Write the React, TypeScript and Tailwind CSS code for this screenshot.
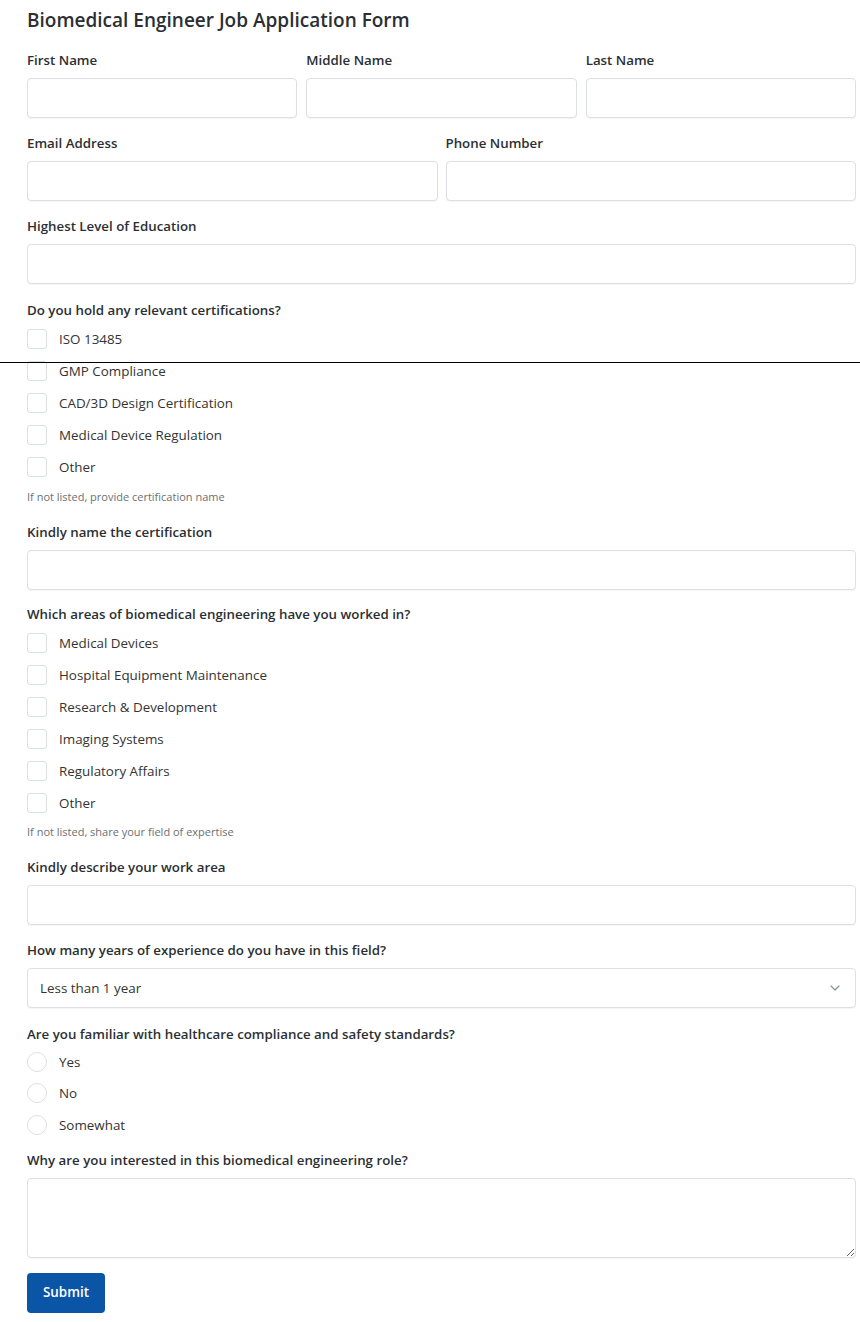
import React from 'react';

const font = { fontFamily: '"Open Sans", "Liberation Sans", sans-serif' };

const Label: React.FC<{ children: React.ReactNode }> = ({ children }) => (
    <label className="block text-[13.3px] leading-5 font-semibold text-[#2b2f33] mb-2">{children}</label>
);

const TextInput: React.FC = () => (
    <input
        type="text"
        className="block w-full h-10 rounded border border-[#dcdfe3] bg-white px-3 text-[13px] outline-none shadow-[0_1px_1px_rgba(0,0,0,0.04)]"
    />
);

const Field: React.FC<{ label: string }> = ({ label }) => (
    <div className="flex flex-col">
        <Label>{label}</Label>
        <TextInput />
    </div>
);

const CheckRow: React.FC<{ text: string; round?: boolean }> = ({ text, round }) => (
    <label className="flex items-center h-8 gap-3">
        <span
            className={`w-5 h-5 shrink-0 border border-[#dcdfe3] bg-white ${round ? 'rounded-full' : 'rounded-[3px]'}`}
        />
        <span className="text-[13.4px] text-[#333]">{text}</span>
    </label>
);

export default function App() {
    const certs = ['ISO 13485', 'GMP Compliance', 'CAD/3D Design Certification', 'Medical Device Regulation', 'Other'];
    const areas = [
        'Medical Devices',
        'Hospital Equipment Maintenance',
        'Research & Development',
        'Imaging Systems',
        'Regulatory Affairs',
        'Other',
    ];

    return (
        <div className="relative min-h-[1322px] bg-white" style={font}>
            <form className="pl-[27px] pr-[4px] pt-[6px] pb-8">
                <h1 className="text-[19px] leading-7 font-semibold text-[#2b2f33] mb-4">
                    Biomedical Engineer Job Application Form
                </h1>

                <div className="grid grid-cols-3 gap-[9px]">
                    <Field label="First Name" />
                    <Field label="Middle Name" />
                    <Field label="Last Name" />
                </div>

                <div className="grid grid-cols-2 gap-2 mt-[15px]">
                    <Field label="Email Address" />
                    <Field label="Phone Number" />
                </div>

                <div className="mt-[15px]">
                    <Field label="Highest Level of Education" />
                </div>

                <div className="mt-[16px]">
                    <Label>Do you hold any relevant certifications?</Label>
                    <div className="-mt-[5px]">
                        {certs.map((c) => (
                            <CheckRow key={c} text={c} />
                        ))}
                    </div>
                    <p className="mt-[6px] text-[11px] leading-4 text-[#6b7075]">If not listed, provide certification name</p>
                </div>

                <div className="mt-[17px]">
                    <Field label="Kindly name the certification" />
                </div>

                <div className="mt-[14px]">
                    <Label>Which areas of biomedical engineering have you worked in?</Label>
                    <div className="-mt-[5px]">
                        {areas.map((a) => (
                            <CheckRow key={a} text={a} />
                        ))}
                    </div>
                    <p className="mt-[5px] text-[11px] leading-4 text-[#6b7075]">If not listed, share your field of expertise</p>
                </div>

                <div className="mt-[17px]">
                    <Field label="Kindly describe your work area" />
                </div>

                <div className="mt-[15px]">
                    <Label>How many years of experience do you have in this field?</Label>
                    <div className="relative">
                        <select className="block w-full h-10 appearance-none rounded border border-[#dcdfe3] bg-white pl-3 pr-8 text-[13.4px] text-[#333] outline-none shadow-[0_1px_1px_rgba(0,0,0,0.04)]">
                            <option>Less than 1 year</option>
                            <option>1-3 years</option>
                            <option>3-5 years</option>
                            <option>More than 5 years</option>
                        </select>
                        <svg
                            className="absolute right-[16px] top-1/2 -translate-y-1/2 pointer-events-none"
                            width="10"
                            height="6"
                            viewBox="0 0 10 6"
                            fill="none"
                        >
                            <path d="M1 1l4 4 4-4" stroke="#8a8f94" strokeWidth="1.2" strokeLinecap="round" strokeLinejoin="round" />
                        </svg>
                    </div>
                </div>

                <div className="mt-[16px]">
                    <Label>Are you familiar with healthcare compliance and safety standards?</Label>
                    <div className="-mt-[6px] flex flex-col">
                        {['Yes', 'No', 'Somewhat'].map((o) => (
                            <div key={o} className="h-[31.5px] flex items-center">
                                <CheckRow text={o} round />
                            </div>
                        ))}
                    </div>
                </div>

                <div className="mt-[9px]">
                    <Label>Why are you interested in this biomedical engineering role?</Label>
                    <textarea className="block w-full h-[80px] rounded border border-[#dcdfe3] bg-white px-3 py-2 text-[13px] outline-none shadow-[0_1px_1px_rgba(0,0,0,0.04)]" />
                </div>

                <button
                    type="button"
                    className="mt-[15px] h-10 px-4 rounded bg-[#0a55a6] text-white text-[13.4px] font-semibold"
                >
                    Submit
                </button>
            </form>
            <div className="absolute left-0 right-0 top-[362px] h-px bg-black" />
        </div>
    );
}
